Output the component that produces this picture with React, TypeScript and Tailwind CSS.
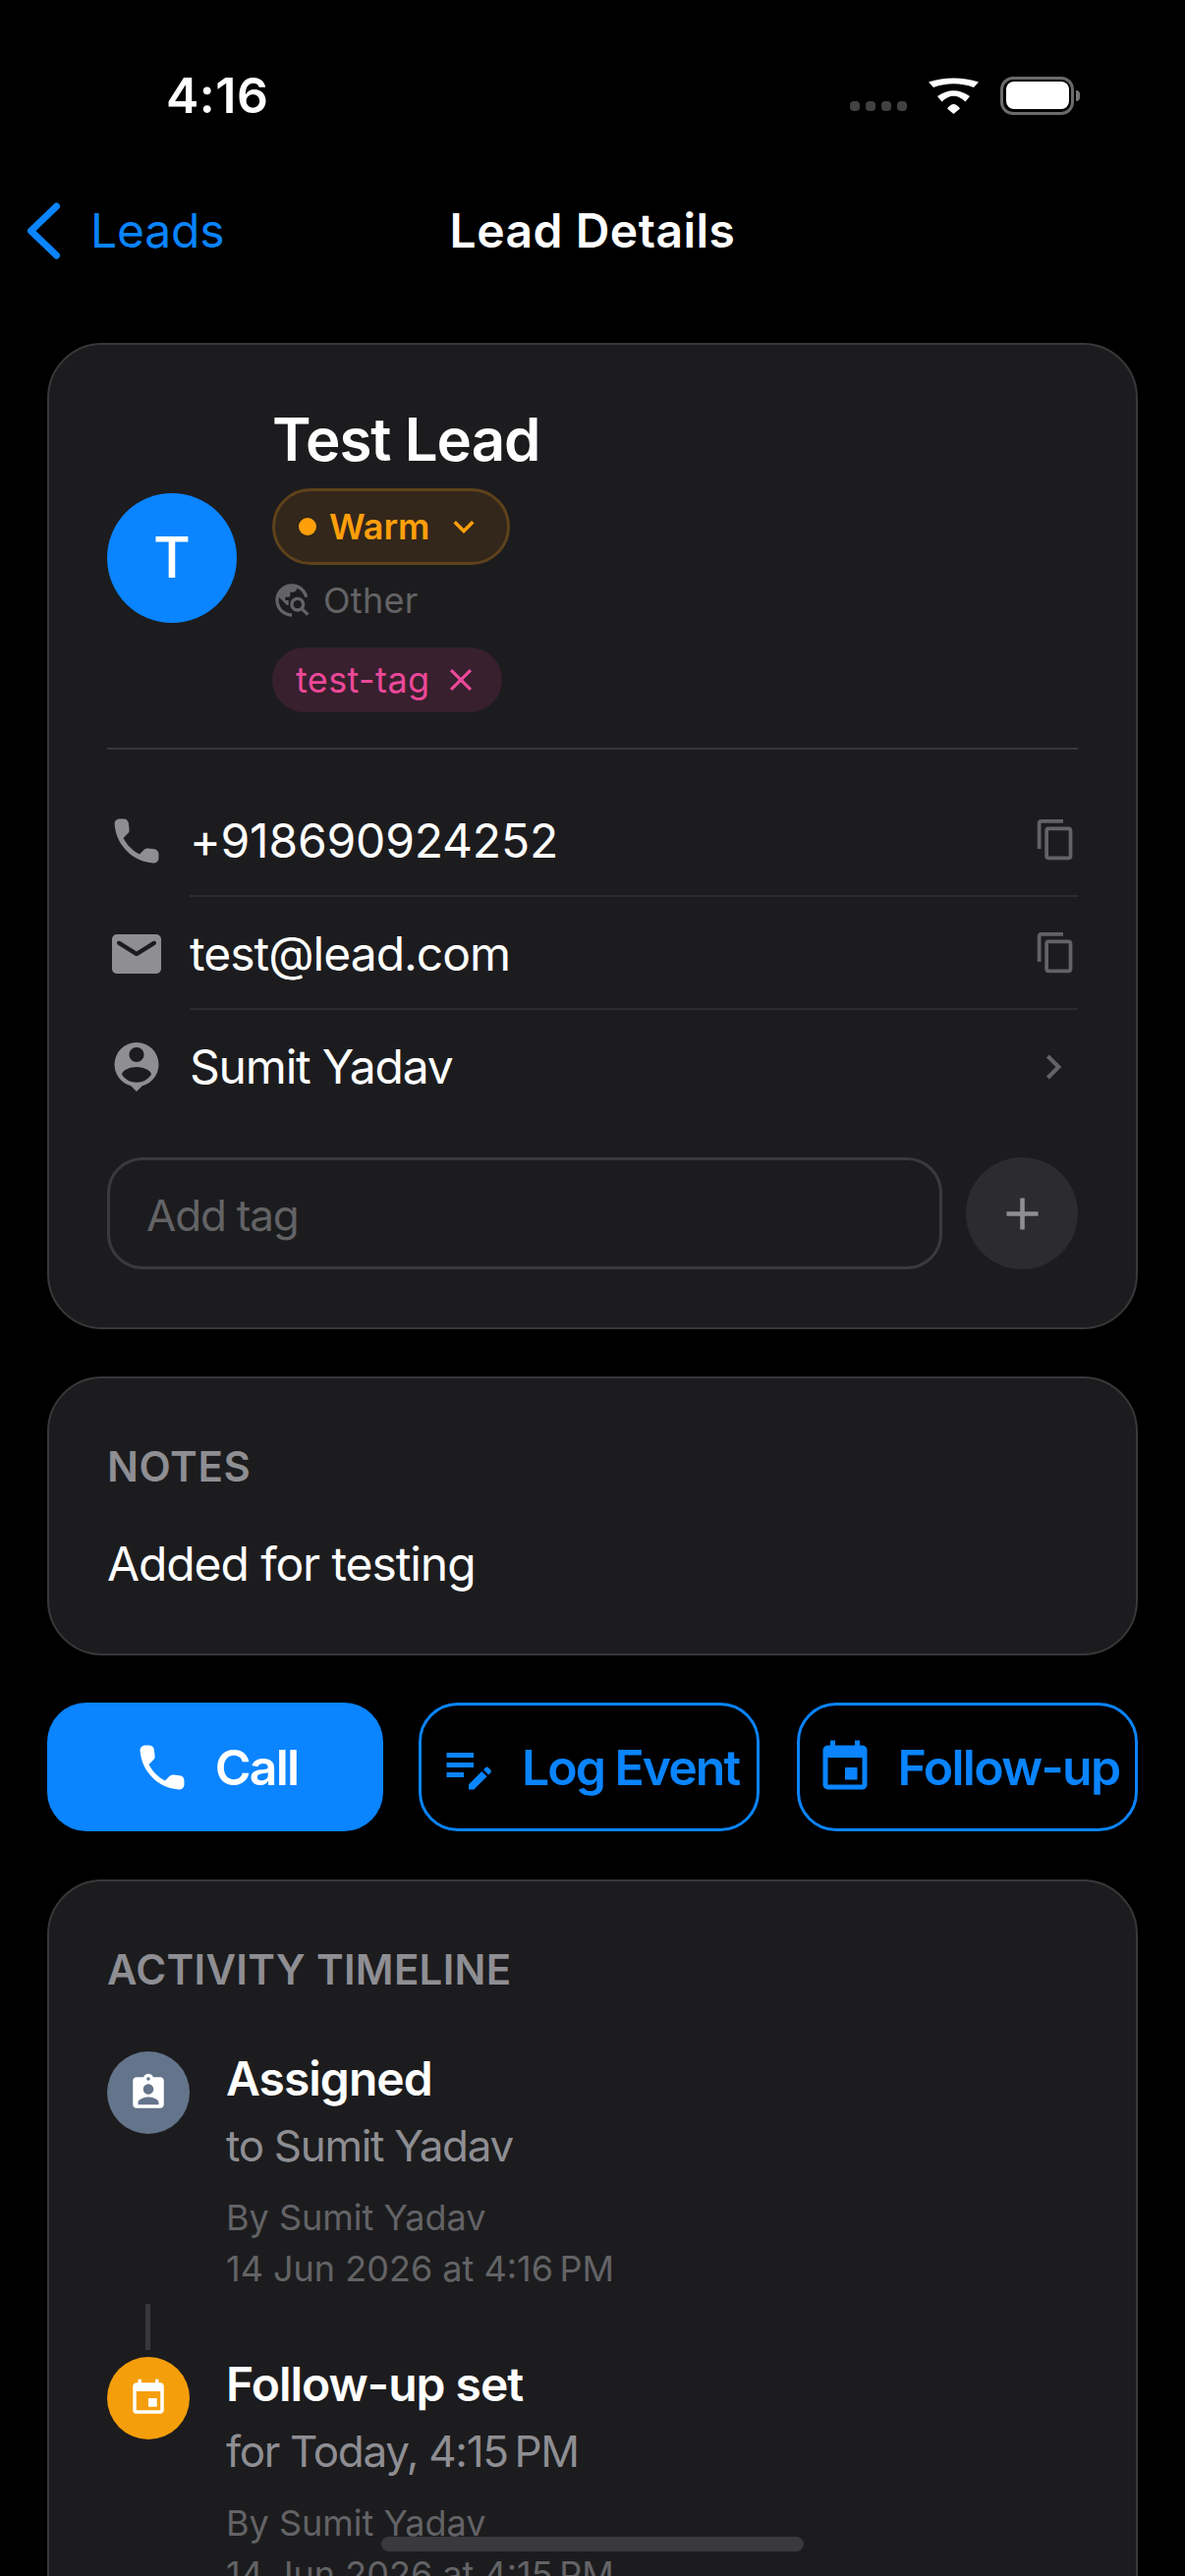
import React from 'react';
import {
  MdPersonPin,
  MdOutlineContentCopy,
  MdChevronRight,
  MdKeyboardArrowDown,
  MdClose,
  MdAdd,
  MdTravelExplore,
  MdEditNote,
  MdEvent,
  MdAssignmentInd,
} from 'react-icons/md';

// rounded material glyphs, the react-icons ones have square corners
const PhoneIcon = ({ size }: { size: number }) => (
  <svg width={size} height={size} viewBox="0 0 24 24" fill="currentColor">
    <path d="M19.230 15.260l-2.540-.290c-.610-.070-1.210.140-1.640.570l-1.840 1.840c-2.830-1.440-5.150-3.750-6.590-6.590l1.850-1.850c.430-.430.640-1.030.570-1.640l-.290-2.520c-.120-1.010-.970-1.770-1.990-1.770H5.030c-1.130 0-2.070.940-2 2.070.530 8.540 7.360 15.360 15.890 15.890 1.130.070 2.070-.870 2.070-2v-1.730c.010-1.010-.750-1.860-1.760-1.980z" />
  </svg>
);

const MailIcon = ({ size }: { size: number }) => (
  <svg width={size} height={size} viewBox="0 0 24 24" fill="currentColor">
    <path d="M20 4H4c-1.100 0-1.990.900-1.990 2L2 18c0 1.100.900 2 2 2h16c1.100 0 2-.900 2-2V6c0-1.100-.900-2-2-2zm-.400 4.250l-7.070 4.420c-.320.200-.740.200-1.060 0L4.400 8.250c-.250-.160-.400-.430-.400-.720 0-.670.730-1.070 1.300-.720L12 11l6.700-4.190c.570-.350 1.300.050 1.300.720 0 .290-.150.560-.400.720z" />
  </svg>
);

const StatusBar = () => (
  <div className="flex h-[194px] items-center pl-[169px] pr-[107px]">
    <span className="text-[50px] font-semibold leading-none tracking-[0.5px] text-white">4:16</span>
    <div className="ml-auto flex items-center">
      <div className="mt-[22px] flex gap-[6px]">
        {[0, 1, 2, 3].map((i) => (
          <span key={i} className="h-[10px] w-[10px] rounded-[4px] bg-[#414143]" />
        ))}
      </div>
      <svg className="ml-[22px]" width="51" height="37" viewBox="0 0 51 37" fill="#fff">
        <path d="M0 4.500 Q25.500 -3.500 51 4.500 L46 10 Q25.500 2.500 5 10 Z" />
        <path d="M9 19 Q25.500 7.500 42 19 L37.500 24.500 Q25.500 13 13.500 24.500 Z" />
        <path d="M19 31.500 Q25.500 22.500 32 31.500 L25.500 37 Z" />
      </svg>
      <div className="ml-[22px] flex items-center">
        <div className="h-[39px] w-[75px] rounded-[13px] border-[3.500px] border-[#6a6a6c] p-[2.500px]">
          <div className="h-full w-full rounded-[8px] bg-white" />
        </div>
        <span className="ml-[2px] h-[11px] w-[4px] rounded-r-full bg-[#77777a]" />
      </div>
    </div>
  </div>
);

const NavBar = () => (
  <div className="grid h-[82px] grid-cols-3 items-center">
    <div className="flex items-center pl-[28px]">
      <svg width="34" height="58" viewBox="0 0 34 58" fill="none">
        <path d="M29.500 4 L3.500 29 L29.500 54" stroke="#0a84ff" strokeWidth="7" strokeLinecap="round" strokeLinejoin="round" />
      </svg>
      <span className="ml-[30px] text-[48px] tracking-[-0.2px] text-[#0a84ff]">Leads</span>
    </div>
    <span className="whitespace-nowrap text-center text-[48px] font-semibold tracking-[0.5px] text-white">Lead Details</span>
  </div>
);

const ContactRow = ({
  icon,
  label,
  trailing,
  labelClass,
  divider = true,
}: {
  icon: React.ReactNode;
  label: string;
  trailing: React.ReactNode;
  labelClass: string;
  divider?: boolean;
}) => (
  <div className="flex h-[115px]">
    <div className="flex w-[84px] items-center text-[#8e8e93]">{icon}</div>
    <div className={`flex flex-1 items-center justify-between ${divider ? 'border-b-2 border-[#2c2c2e]' : ''}`}>
      <span className={`text-[48px] text-white ${labelClass}`}>{label}</span>
      {trailing}
    </div>
  </div>
);

const LeadCard = () => (
  <div className="rounded-[56px] border-2 border-[#38383a] bg-[#1c1c1e] px-[59px] pb-[59px] pt-[59px]">
    <div className="flex items-center gap-[36px]">
      <div className="flex h-[132px] w-[132px] items-center justify-center rounded-full bg-[#0a84ff] text-[58px] font-medium text-white">
        T
      </div>
      <div className="flex flex-col items-start">
        <span className="pt-[2px] text-[60px] font-semibold leading-[70px] tracking-[-1px] text-white">Test Lead</span>
        <div className="mt-[15px] flex h-[78px] w-[242px] items-center rounded-full border-[3px] border-[#5f421b] bg-[#33271b] pl-[24px]">
          <span className="h-[18px] w-[18px] rounded-full bg-[#ff9f0a]" />
          <span className="ml-[13px] text-[36px] font-semibold text-[#ff9f0a]">Warm</span>
          <MdKeyboardArrowDown className="ml-[14px] text-[#ff9f0a]" size={42} />
        </div>
        <div className="mt-[18px] flex h-[36px] items-center text-[#636366]">
          <MdTravelExplore size={40} />
          <span className="ml-[12px] text-[36px] tracking-[0.3px]">Other</span>
        </div>
        <div className="mt-[30px] flex h-[66px] w-[234px] items-center rounded-full bg-[#38202e] pl-[24px]">
          <span className="text-[36px] tracking-[0.4px] text-[#ec4899]">test-tag</span>
          <MdClose className="ml-[12px] text-[#ec4899]" size={38} />
        </div>
      </div>
    </div>

    <div className="mt-[36px] h-[2px] bg-[#38383a]" />

    <div className="mt-[35px] flex flex-col">
      <ContactRow
        icon={<PhoneIcon size={60} />}
        label="+918690924252"
        labelClass="pt-[2px] tracking-[-0.2px]"
        trailing={<MdOutlineContentCopy className="text-[#636366]" size={45} />}
      />
      <ContactRow
        icon={<MailIcon size={60} />}
        label="test@lead.com"
        labelClass="pt-[2px] tracking-[-1px]"
        trailing={<MdOutlineContentCopy className="text-[#636366]" size={45} />}
      />
      <ContactRow
        icon={<MdPersonPin size={60} />}
        label="Sumit Yadav"
        labelClass="tracking-[-1.2px]"
        divider={false}
        trailing={<MdChevronRight className="text-[#636366]" size={50} />}
      />
    </div>

    <div className="mt-[35px] flex items-center gap-[24px]">
      <div className="flex h-[114px] flex-1 items-center rounded-[36px] border-[3px] border-[#3a3a3c] pl-[37px]">
        <span className="pt-[4px] text-[44px] tracking-[-1.2px] text-[#636366]">Add tag</span>
      </div>
      <div className="flex h-[114px] w-[114px] items-center justify-center rounded-full bg-[#2c2c2e] text-[#8e8e93]">
        <MdAdd size={55} />
      </div>
    </div>
  </div>
);

const NotesCard = () => (
  <div className="mt-[48px] h-[284px] rounded-[56px] border-2 border-[#38383a] bg-[#1c1c1e] px-[59px] pt-[61px]">
    <div className="text-[42px] font-semibold leading-[58px] tracking-[0.6px] text-[#8e8e93]">NOTES</div>
    <div className="mt-[41px] text-[48px] leading-[58px] tracking-[-1.1px] text-white">Added for testing</div>
  </div>
);

const ActionButtons = () => (
  <div className="mt-[48px] flex h-[131px] gap-[36px]">
    <button className="flex w-[342px] items-center justify-center gap-[24px] rounded-[40px] bg-[#0a84ff] text-[50px] font-semibold tracking-[-1.8px] text-white">
      <PhoneIcon size={60} />
      <span className="pt-[2px]">Call</span>
    </button>
    <button className="flex w-[347px] items-center justify-center gap-[24px] whitespace-nowrap rounded-[40px] border-[3px] border-[#0a84ff] text-[50px] font-semibold tracking-[-2px] text-[#0a84ff]">
      <MdEditNote size={60} />
      <span className="pt-[2px]">Log Event</span>
    </button>
    <button className="ml-auto flex w-[347px] items-center justify-center gap-[24px] whitespace-nowrap rounded-[40px] border-[3px] border-[#0a84ff] text-[50px] font-semibold tracking-[-1.7px] text-[#0a84ff]">
      <MdEvent size={60} />
      <span className="pt-[2px]">Follow-up</span>
    </button>
  </div>
);

const TimelineItem = ({
  icon,
  iconBg,
  title,
  detail,
  by,
  when,
}: {
  icon: React.ReactNode;
  iconBg: string;
  title: string;
  detail: string;
  by: string;
  when: string;
}) => (
  <div className="flex gap-[37px]">
    <div className={`flex h-[84px] w-[84px] shrink-0 items-center justify-center rounded-full text-white ${iconBg}`}>
      {icon}
    </div>
    <div className="flex flex-col">
      <span className="text-[48px] font-semibold leading-[56px] tracking-[-1px] text-white">{title}</span>
      <span className="mt-[14px] text-[44px] leading-[52px] tracking-[-1.300px] text-[#8e8e93]">{detail}</span>
      <span className="mt-[21px] text-[36px] leading-[52px] text-[#636366]">{by}</span>
      <span className="text-[36px] leading-[52px] text-[#636366]">{when}</span>
    </div>
  </div>
);

const TimelineCard = () => (
  <div className="mt-[49px] rounded-[56px] border-2 border-[#38383a] bg-[#1c1c1e] px-[59px] pb-[58px] pt-[61px]">
    <div className="text-[42px] font-semibold leading-[58px] tracking-[0.3px] text-[#8e8e93]">ACTIVITY TIMELINE</div>
    <div className="mt-[54px] flex flex-col">
      <TimelineItem
        icon={<MdAssignmentInd size={42} />}
        iconBg="bg-[#64748b]"
        title="Assigned"
        detail="to Sumit Yadav"
        by="By Sumit Yadav"
        when={'14 Jun 2026 at 4:16\u202fPM'}
      />
      <div className="mb-[7px] ml-[39px] mt-[10px] h-[47px] w-[5px] bg-[#38383a]" />
      <TimelineItem
        icon={<MdEvent size={42} />}
        iconBg="bg-[#f59e0b]"
        title="Follow-up set"
        detail={'for Today, 4:15\u202fPM'}
        by="By Sumit Yadav"
        when={'14 Jun 2026 at 4:15\u202fPM'}
      />
    </div>
  </div>
);

export default function App() {
  return (
    <div className="relative h-[2622px] w-[1206px] overflow-hidden bg-black font-['Inter',sans-serif]">
      <StatusBar />
      <NavBar />
      <div className="px-[48px] pt-[73px]">
        <LeadCard />
        <NotesCard />
        <ActionButtons />
        <TimelineCard />
      </div>
      <div className="absolute left-[388px] top-[2582px] h-[15px] w-[430px] rounded-full bg-[#3a3a3c]" />
    </div>
  );
}
